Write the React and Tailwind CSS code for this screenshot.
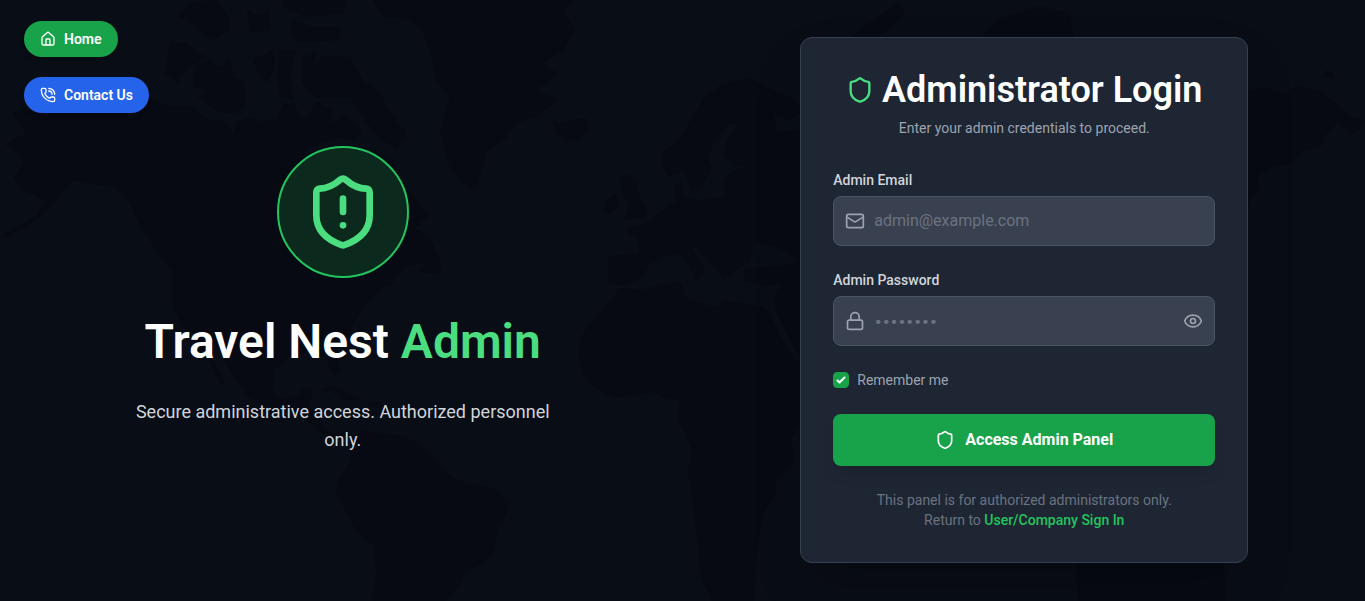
import { Eye, House, Lock, Mail, PhoneCall, Shield, ShieldAlert } from "lucide-react";

const LAND = [
  // Alaska, Canada, the United States, Mexico and Central America
  "M12 112 L24 110 L55 112 L100 102 L150 98 L160 103 L170 107 L190 106 L206 119 L224 121 L233 134 L236 122 L250 117 L262 122 L277 119 L283 104 L293 103 L303 120 L317 103 L333 110 L331 124 L345 116 L358 124 L362 134 L350 140 L336 138 L322 142 L308 150 L300 158 L322 172 L345 178 L352 190 L362 178 L360 160 L372 148 L392 160 L402 182 L416 200 L428 216 L415 228 L430 238 L440 262 L442 274 L418 272 L428 262 L410 266 L400 272 L392 284 L378 290 L366 304 L356 318 L350 332 L336 350 L340 372 L334 376 L326 358 L310 352 L290 356 L274 370 L272 390 L280 400 L296 396 L304 388 L314 390 L308 406 L320 410 L322 426 L334 434 L348 432 L354 438 L340 440 L326 436 L310 424 L296 412 L276 408 L250 398 L240 386 L228 366 L212 340 L202 330 L214 360 L226 384 L220 384 L206 356 L194 334 L182 326 L172 306 L172 272 L160 256 L140 226 L128 200 L112 186 L90 184 L72 180 L62 192 L50 208 L30 224 L8 236 L0 237 L36 216 L46 200 L22 190 L14 178 L24 160 L5 144 L26 134 Z",
  // Arctic islands
  "M170 43 L187 43 L205 57 L187 70 L177 83 L165 73 Z",
  "M193 67 L207 60 L220 67 L230 60 L233 77 L243 80 L247 100 L237 113 L220 113 L197 97 L207 90 L193 87 Z",
  "M253 60 L273 50 L275 67 L267 83 L257 70 Z",
  "M280 50 L297 50 L290 73 L293 100 L280 97 L277 77 Z",
  "M303 57 L317 53 L312 74 L320 56 L350 57 L363 80 L380 93 L390 113 L407 133 L397 150 L383 140 L367 123 L350 97 L317 98 L302 83 Z",
  "M177 17 L193 2 L217 0 L230 20 L230 30 L213 40 L197 27 L187 20 Z",
  "M247 10 L258 16 L270 10 L270 30 L250 33 Z",
  "M293 20 L312 27 L340 27 L340 40 L300 42 L290 33 Z",
  "M283 0 L347 0 L343 13 L307 17 L283 7 Z",
  // Greenland
  "M373 0 L383 17 L403 18 L420 27 L430 50 L434 72 L437 80 L450 97 L440 130 L443 146 L450 167 L462 182 L475 191 L482 168 L488 150 L504 140 L517 123 L540 115 L557 100 L537 90 L557 73 L543 63 L563 50 L575 30 L563 10 L573 0 Z",
  // Iceland
  "M552 120 L560 124 L572 120 L586 118 L590 128 L580 138 L570 141 L556 134 Z",
  // Caribbean
  "M322 390 L334 386 L354 396 L362 400 L346 400 L332 392 Z",
  "M366 402 L380 402 L384 408 L370 408 Z",
  // South America
  "M350 438 L362 430 L382 434 L404 436 L422 446 L438 462 L450 476 L470 484 L492 488 L508 500 L508 512 L498 528 L494 552 L482 564 L466 570 L458 586 L446 601 L372 601 L376 576 L374 546 L356 530 L344 508 L335 492 L340 476 L350 462 Z",
  // Great Britain and Ireland
  "M620 178 L630 174 L636 182 L640 196 L648 212 L644 218 L624 220 L630 206 L622 192 Z",
  "M606 200 L616 194 L620 206 L610 214 L604 212 Z",
  // Scandinavia, Europe and Asia
  "M662 152 L680 140 L692 118 L704 98 L722 84 L748 78 L768 88 L796 100 L801 112 L790 120 L774 114 L776 132 L801 130 L830 100 L880 90 L960 84 L1040 76 L1120 82 L1200 88 L1249 90 L1266 88 L1284 94 L1296 86 L1322 92 L1342 108 L1352 116 L1365 121 L1354 134 L1336 124 L1326 134 L1322 146 L1304 150 L1290 164 L1274 166 L1258 176 L1260 188 L1249 202 L1180 300 L1060 380 L960 360 L880 380 L801 360 L776 312 L774 296 L782 284 L760 286 L744 280 L744 268 L780 266 L801 262 L780 248 L756 242 L748 262 L738 268 L724 280 L712 264 L696 248 L690 246 L700 262 L706 272 L696 280 L690 266 L680 254 L664 256 L650 264 L640 278 L626 286 L608 282 L608 256 L638 254 L638 240 L626 230 L646 224 L660 212 L676 202 L674 186 L682 182 L684 198 L700 200 L724 196 L724 180 L734 170 L756 164 L736 166 L724 156 L726 142 L738 124 L728 124 L712 146 L708 158 L712 166 L704 182 L698 192 L692 190 L684 172 L668 176 L662 168 Z",
  // Africa
  "M620 288 L642 290 L664 284 L682 282 L684 296 L704 304 L716 308 L724 300 L760 306 L768 310 L784 344 L801 366 L840 376 L830 400 L801 420 L790 440 L796 460 L776 480 L776 494 L764 512 L758 540 L754 601 L712 601 L700 576 L698 548 L694 512 L688 470 L692 450 L678 418 L680 400 L664 398 L656 392 L614 398 L596 388 L582 374 L578 356 L580 338 L592 322 L606 306 Z",
  // Australia and the northern islands of Russia
  "M1076 563 L1080 545 L1200 540 L1224 563 L1226 601 L1078 601 Z",
  "M1320 76 L1326 70 L1334 74 L1334 78 Z",
  "M850 38 L876 18 L898 4 L906 10 L890 28 L872 40 Z",
  "M980 38 L1000 18 L1040 6 L1070 14 L1074 38 Z",
];

function WorldMap() {
  return (
    <svg
      className="absolute inset-0 h-full w-full text-[#070a12]"
      viewBox="0 0 1365 601"
      preserveAspectRatio="xMidYMid slice"
      fill="currentColor"
      aria-hidden="true"
    >
      {LAND.map((d) => (
        <path key={d} d={d} />
      ))}
    </svg>
  );
}

const pill =
  "flex items-center gap-2 rounded-full px-4 py-2 text-sm font-semibold text-white shadow-md";
const field =
  "w-full rounded-lg border border-gray-600 bg-[#394150] py-3 pl-10 text-base text-white placeholder:text-[#6b7280]";

export default function App() {
  return (
    <div className="relative isolate min-h-screen overflow-hidden bg-[#090d15] font-[Roboto,sans-serif]">
      <WorldMap />

      <nav className="absolute left-6 top-[21px] z-10 flex flex-col items-start gap-5">
        <a href="#home" className={`${pill} bg-[#18a34a]`}>
          <House size={16} />
          Home
        </a>
        <a href="#contact" className={`${pill} bg-[#2563eb]`}>
          <PhoneCall size={16} />
          Contact Us
        </a>
      </nav>

      <main className="relative grid min-h-screen grid-cols-1 pb-0.5 pl-0.5 md:grid-cols-2">
        <section className="flex flex-col items-center justify-center p-6 text-center">
          <div className="mb-10 rounded-full border-2 border-[#22c55e] bg-[#0c291d] p-6 text-[#4ade80]">
            <ShieldAlert size={80} />
          </div>
          <h1 className="mb-8 text-5xl font-semibold text-white">
            Travel Nest <span className="text-[#4ade80]">Admin</span>
          </h1>
          <p className="max-w-md text-lg leading-7 text-[#d1d5db]">
            Secure administrative access. Authorized personnel only.
          </p>
        </section>

        <section className="flex items-center justify-center p-6">
          <div className="w-full max-w-md rounded-xl border border-[#374151] bg-[#1e2634] p-8 shadow-2xl">
            <header className="mb-8 text-center">
              <h2 className="flex items-center justify-center gap-2 text-4xl font-semibold text-white">
                <Shield size={28} className="text-[#4ade80]" />
                Administrator Login
              </h2>
              <p className="mt-2 text-sm text-[#9ca3af]">Enter your admin credentials to proceed.</p>
            </header>

            <form className="flex flex-col gap-6" onSubmit={(e) => e.preventDefault()}>
              <div className="flex flex-col gap-1.5">
                <label htmlFor="email" className="text-sm font-medium text-[#d1d5db]">
                  Admin Email
                </label>
                <div className="relative">
                  <Mail size={20} className="absolute inset-y-0 left-3 my-auto text-[#9ca3af]" />
                  <input id="email" type="email" placeholder="admin@example.com" className={`${field} pr-3`} />
                </div>
              </div>

              <div className="flex flex-col gap-1.5">
                <label htmlFor="password" className="text-sm font-medium text-[#d1d5db]">
                  Admin Password
                </label>
                <div className="relative">
                  <Lock size={20} className="absolute inset-y-0 left-3 my-auto text-[#9ca3af]" />
                  <input
                    id="password"
                    type="password"
                    placeholder="••••••••"
                    className={`${field} pr-10 placeholder:font-[Inter,sans-serif] placeholder:text-sm`}
                  />
                  <button
                    type="button"
                    aria-label="Show password"
                    className="absolute inset-y-0 right-3 flex items-center text-[#9ca3af]"
                  >
                    <Eye size={20} />
                  </button>
                </div>
              </div>

              <div className="flex items-center gap-2">
                <span className="relative flex h-4 w-4">
                  <input
                    id="remember"
                    type="checkbox"
                    defaultChecked
                    className="peer h-4 w-4 appearance-none rounded border border-gray-600 bg-[#394150] checked:border-[#18a34a] checked:bg-[#18a34a]"
                  />
                  <svg
                    viewBox="0 0 16 16"
                    fill="currentColor"
                    className="pointer-events-none absolute inset-0 hidden h-4 w-4 text-white peer-checked:block"
                    aria-hidden="true"
                  >
                    <path d="M12.207 4.793a1 1 0 010 1.414l-5 5a1 1 0 01-1.414 0l-2-2a1 1 0 011.414-1.414L6.5 9.086l4.293-4.293a1 1 0 011.414 0z" />
                  </svg>
                </span>
                <label htmlFor="remember" className="text-sm text-[#9ca3af]">
                  Remember me
                </label>
              </div>

              <button
                type="submit"
                className="flex items-center justify-center gap-2.5 rounded-lg bg-[#18a34a] px-4 py-3.5 text-base font-bold text-white shadow-lg"
              >
                <Shield size={20} />
                Access Admin Panel
              </button>
            </form>

            <p className="mt-6 text-center text-sm text-[#6b7280]">
              This panel is for authorized administrators only.
              <br />
              Return to{" "}
              <a href="#sign-in" className="font-medium text-[#22c55e]">
                User/Company Sign In
              </a>
            </p>
          </div>
        </section>
      </main>
    </div>
  );
}
